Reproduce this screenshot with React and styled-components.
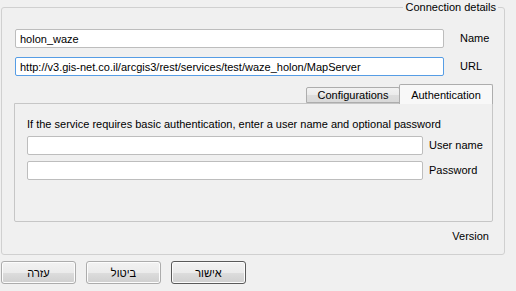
import React from 'react'
import styled, { createGlobalStyle } from 'styled-components'

const GlobalStyle = createGlobalStyle`
  html, body {
    margin: 0;
    padding: 0;
    background: #f0f0f0;
  }
  body {
    font-family: "Liberation Sans", Arial, "Noto Sans", sans-serif;
    font-size: 11px;
    color: #000;
  }
  * { box-sizing: border-box; }
`

const Window = styled.div`
  width: 516px;
  height: 291px;
  overflow: hidden;
  padding: 7px 11px 0 1px;
  display: flex;
  flex-direction: column;
`

const GroupBox = styled.div`
  position: relative;
  height: 248px;
  border: 1px solid #d0d0d0;
  border-radius: 3px;
  padding: 21px 0 0 13px;
  display: flex;
  flex-direction: column;
`

const GroupTitle = styled.span`
  position: absolute;
  top: -8px;
  right: 6px;
  padding: 0 2px;
  line-height: 14px;
  background: #f0f0f0;
`

const FormGrid = styled.div`
  display: grid;
  grid-template-columns: 1fr ${p => p.$label}px;
  column-gap: ${p => p.$gap}px;
  row-gap: ${p => p.$rowGap}px;
  align-items: center;
`

const LineEdit = styled.input`
  height: 19px;
  width: 100%;
  margin: 0;
  padding: 0 4px;
  border: 1px solid ${p => (p.$focused ? '#569de5' : '#bdbdbd')};
  border-radius: 2px;
  background: #fff;
  font: inherit;
  color: #000;
  outline: none;
`

const FieldLabel = styled.label`
  white-space: nowrap;
  line-height: 13px;
`

const TabWidget = styled.div`
  margin: 8px 11px 0 -1px;
  display: flex;
  flex-direction: column;
`

const TabBar = styled.div`
  display: flex;
  justify-content: flex-end;
  align-items: flex-end;
  height: 19px;
  position: relative;
  z-index: 1;
`

const Tab = styled.div`
  width: ${p => p.$w}px;
  height: ${p => (p.$active ? 20 : 16)}px;
  margin-bottom: ${p => (p.$active ? -1 : 0)}px;
  border: 1px solid #adadad;
  border-bottom: ${p => (p.$active ? 'none' : '1px solid #adadad')};
  border-radius: 2px 2px 0 0;
  background: ${p =>
    p.$active ? '#f8f8f8' : 'linear-gradient(#f2f2f2, #ebebeb 50%, #dddddd 51%, #d9d9d9)'};
  display: flex;
  justify-content: center;
  align-items: ${p => (p.$active ? 'flex-start' : 'center')};
  padding-top: ${p => (p.$active ? 4 : 0)}px;
  & + & { margin-left: -1px; }
`

const Pane = styled.div`
  height: 119px;
  border: 1px solid #c6c6c6;
  border-radius: 0 0 2px 2px;
  background: #f0f0f0;
  padding: 14px 0 0 12px;
  display: flex;
  flex-direction: column;
`

const Hint = styled.div`
  line-height: 13px;
  margin-bottom: 5px;
  white-space: nowrap;
`

const VersionRow = styled.div`
  display: flex;
  justify-content: flex-end;
  padding: 8px 15px 0 0;
  line-height: 13px;
`

const ButtonRow = styled.div`
  display: flex;
  gap: 10px;
  margin-top: 6px;
`

const Button = styled.button`
  width: 75px;
  height: 23px;
  margin: 0;
  padding: 0;
  border: 1px solid ${p => (p.$default ? '#5a5a5a' : '#acacac')};
  border-radius: 3px;
  background: linear-gradient(#f2f2f2, #ebebeb 50%, #dddddd 51%, #cfcfcf);
  box-shadow: inset 0 0 0 1px #fcfcfc;
  font: inherit;
  color: #000;
  direction: rtl;
`

export default function App() {
  return (
    <>
      <GlobalStyle />
      <Window>
        <GroupBox>
          <GroupTitle>Connection details</GroupTitle>
          <FormGrid $label={44} $gap={16} $rowGap={9}>
            <LineEdit readOnly value="holon_waze" />
            <FieldLabel>Name</FieldLabel>
            <LineEdit
              readOnly
              $focused
              value="http://v3.gis-net.co.il/arcgis3/rest/services/test/waze_holon/MapServer"
            />
            <FieldLabel>URL</FieldLabel>
          </FormGrid>
          <TabWidget>
            <TabBar>
              <Tab $w={94}>Configurations</Tab>
              <Tab $w={94} $active>Authentication</Tab>
            </TabBar>
            <Pane>
              <Hint>If the service requires basic authentication, enter a user name and optional password</Hint>
              <FormGrid $label={63} $gap={6} $rowGap={6}>
                <LineEdit readOnly value="" />
                <FieldLabel>User name</FieldLabel>
                <LineEdit readOnly type="password" value="" />
                <FieldLabel>Password</FieldLabel>
              </FormGrid>
            </Pane>
          </TabWidget>
          <VersionRow>Version</VersionRow>
        </GroupBox>
        <ButtonRow>
          <Button>עזרה</Button>
          <Button>ביטול</Button>
          <Button $default>אישור</Button>
        </ButtonRow>
      </Window>
    </>
  )
}
